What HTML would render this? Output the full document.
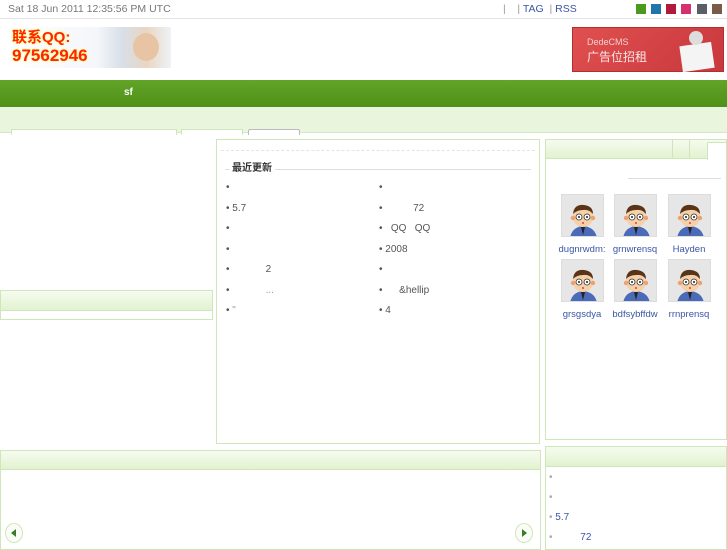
<!DOCTYPE html>
<html><head><meta charset="utf-8"><style>
*{margin:0;padding:0;box-sizing:border-box}
body{width:727px;height:545px;overflow:hidden;background:#fff;font-family:"Liberation Sans","Noto Sans CJK SC",sans-serif;font-size:10px;color:#555;position:relative}
.a{position:absolute}
.gh{background:linear-gradient(#f6fbef,#e2f2d0);border-bottom:1px solid #cfe6bb}
.box{position:absolute;border:1px solid #cfe6bb;background:#fff}
.li{position:absolute;font-size:10px;color:#555;line-height:12px}
.av{position:absolute;width:43px;height:43px;border:1px solid #ddd;background:#e6e6e6;overflow:hidden}
.nm{position:absolute;font-size:9.5px;color:#3a55a5;width:56px;text-align:center;white-space:nowrap;overflow:hidden}
.sw{position:absolute;top:4px;width:10px;height:10px}
</style></head><body>
<div class="a" style="left:0;top:0;width:727px;height:19px;border-bottom:1px solid #e4e4e4"></div>
<div class="a" style="left:8px;top:3px;color:#777;font-size:10.5px;line-height:12px">Sat 18 Jun 2011 12:35:56 PM UTC</div>
<div class="a" style="left:503px;top:3px;color:#3a55a5;font-size:10.5px;line-height:12px"><span style="color:#999">|</span>&nbsp;&nbsp;&nbsp;&nbsp;<span style="color:#999">|</span> TAG&nbsp;&nbsp;<span style="color:#999">|</span> RSS</div>
<div class="sw" style="left:636px;background:#4b9a1c"></div>
<div class="sw" style="left:651px;background:#1f74a8"></div>
<div class="sw" style="left:666px;background:#b21a3c"></div>
<div class="sw" style="left:681px;background:#d6306f"></div>
<div class="sw" style="left:697px;background:#5a5e66"></div>
<div class="sw" style="left:712px;background:#7c5a48"></div>
<div class="a" style="left:8px;top:27px;width:163px;height:41px;background:linear-gradient(90deg,#fff 0%,#f4f6fa 55%,#d8dfe8 70%,#e8d6c4 85%,#f0f2f6 100%)">
<div class="a" style="left:4px;top:2px;color:#f21;font-size:15px;line-height:17px;font-weight:bold;text-shadow:0 0 2px #ff0">联系QQ:</div>
<div class="a" style="left:4px;top:19px;color:#f21;font-size:17px;line-height:19px;font-weight:bold;text-shadow:0 0 2px #ff0">97562946</div>
<div class="a" style="left:125px;top:6px;width:26px;height:28px;border-radius:50%;background:#e8c4a4"></div>
</div>
<div class="a" style="left:572px;top:27px;width:152px;height:45px;background:linear-gradient(135deg,#e05050,#c8383c);border:1px solid #b03030">
<div class="a" style="left:14px;top:9px;color:#f3d0d0;font-size:9px">DedeCMS</div>
<div class="a" style="left:14px;top:20px;color:#fbe6e6;font-size:12px">广告位招租</div>
<div class="a" style="left:108px;top:16px;width:32px;height:26px;background:#f4f4f4;transform:rotate(-8deg)"></div>
<div class="a" style="left:116px;top:3px;width:14px;height:14px;border-radius:50%;background:#ddd"></div>
</div>
<div class="a" style="left:0;top:80px;width:727px;height:27px;background:linear-gradient(#62a428,#4f9118)"></div>
<div class="a" style="left:124px;top:87px;color:#fff;font-weight:bold;font-size:10px">sf</div>
<div class="a" style="left:0;top:107px;width:727px;height:26px;background:#eaf5de;border-bottom:1px solid #d4e9c0"></div>
<div class="a" style="left:11px;top:129px;width:166px;height:6px;background:#fff;border:1px solid #cfe6bb;border-bottom:none"></div>
<div class="a" style="left:181px;top:129px;width:62px;height:6px;background:#fff;border:1px solid #cfe6bb;border-bottom:none"></div>
<div class="a" style="left:248px;top:129px;width:52px;height:6px;background:#fff;border:1px solid #bbb;border-bottom:none;border-radius:2px 2px 0 0"></div>

<div class="box" style="left:0;top:290px;width:213px;height:30px"><div class="gh" style="height:20px"></div></div>

<div class="box" style="left:216px;top:139px;width:324px;height:305px">
<div class="a" style="left:4px;top:10px;width:314px;border-top:1px dashed #e4e4e4"></div>
<div class="a" style="left:8px;top:29px;width:306px;border-top:1px solid #ddd"></div>
<div class="a" style="left:12px;top:23px;background:#fff;padding:0 3px;font-weight:bold;color:#333;font-size:10px;line-height:12px">最近更新</div>
</div>
<div class="li" style="left:226px;top:182px">•</div>
<div class="li" style="left:226px;top:203px">• 5.7</div>
<div class="li" style="left:226px;top:223px">•</div>
<div class="li" style="left:226px;top:244px">•</div>
<div class="li" style="left:226px;top:264px">•&nbsp;&nbsp;&nbsp;&nbsp;&nbsp;&nbsp;&nbsp;&nbsp;&nbsp;&nbsp;&nbsp;&nbsp;&nbsp;2</div>
<div class="li" style="left:226px;top:285px">•&nbsp;&nbsp;&nbsp;&nbsp;&nbsp;&nbsp;&nbsp;&nbsp;&nbsp;&nbsp;&nbsp;&nbsp;&nbsp;<span style="color:#999">...</span></div>
<div class="li" style="left:226px;top:305px">• <span style="color:#999">"</span></div>
<div class="li" style="left:379px;top:182px">•</div>
<div class="li" style="left:379px;top:203px">•&nbsp;&nbsp;&nbsp;&nbsp;&nbsp;&nbsp;&nbsp;&nbsp;&nbsp;&nbsp;&nbsp;72</div>
<div class="li" style="left:379px;top:223px">•&nbsp;&nbsp;&nbsp;QQ&nbsp;&nbsp;&nbsp;QQ</div>
<div class="li" style="left:379px;top:244px">• 2008</div>
<div class="li" style="left:379px;top:264px">•</div>
<div class="li" style="left:379px;top:285px">•&nbsp;&nbsp;&nbsp;&nbsp;&nbsp;&nbsp;&amp;hellip</div>
<div class="li" style="left:379px;top:305px">• 4</div>

<div class="box" style="left:545px;top:139px;width:182px;height:301px">
<div class="gh" style="height:19px"></div>
<div class="a" style="left:126px;top:0;width:1px;height:19px;background:#cfe6bb"></div>
<div class="a" style="left:143px;top:0;width:1px;height:19px;background:#cfe6bb"></div>
<div class="a" style="left:161px;top:2px;width:20px;height:18px;background:#fff;border:1px solid #cfe6bb;border-bottom:none"></div>
<div class="a" style="left:82px;top:38px;width:93px;border-top:1px solid #ddd"></div>
</div>
<div class="av" style="left:561px;top:194px"><svg width="43" height="43"><use href="#m"/></svg></div>
<div class="av" style="left:614px;top:194px"><svg width="43" height="43"><use href="#m"/></svg></div>
<div class="av" style="left:668px;top:194px"><svg width="43" height="43"><use href="#m"/></svg></div>
<div class="av" style="left:561px;top:259px"><svg width="43" height="43"><use href="#m"/></svg></div>
<div class="av" style="left:614px;top:259px"><svg width="43" height="43"><use href="#m"/></svg></div>
<div class="av" style="left:668px;top:259px"><svg width="43" height="43"><use href="#m"/></svg></div>
<svg width="0" height="0" style="position:absolute"><defs><g id="m">
<path d="M8 43 Q10 32 21 31 Q33 32 35 43Z" fill="#4b6bb8"/>
<path d="M19 32 L21 40 L23 32Z" fill="#222"/>
<circle cx="21" cy="22" r="10" fill="#f5d0a8"/>
<path d="M11 19 Q12 9 22 10 Q31 11 31 19 Q27 14 21 15 Q15 15 11 19Z" fill="#5a3418"/>
<circle cx="17" cy="22" r="3" fill="#fff" stroke="#333" stroke-width=".8"/>
<circle cx="25" cy="22" r="3" fill="#fff" stroke="#333" stroke-width=".8"/>
<circle cx="17" cy="22" r="1" fill="#222"/><circle cx="25" cy="22" r="1" fill="#222"/>
<circle cx="11" cy="23" r="2.2" fill="#f0a070"/><circle cx="31" cy="23" r="2.2" fill="#f0a070"/>
<circle cx="21" cy="28" r="1" fill="#d44"/>
</g></defs></svg>
<div class="nm" style="left:554px;top:244px">dugnrwdm:</div>
<div class="nm" style="left:607px;top:244px">grnwrensq</div>
<div class="nm" style="left:661px;top:244px">Hayden</div>
<div class="nm" style="left:554px;top:309px">grsgsdya</div>
<div class="nm" style="left:607px;top:309px">bdfsybffdw</div>
<div class="nm" style="left:661px;top:309px">rrnprensq</div>

<div class="box" style="left:0;top:450px;width:541px;height:100px"><div class="gh" style="height:19px"></div></div>
<div class="a" style="left:5px;top:523px;width:18px;height:20px;border-radius:50%;border:1px solid #cfe6bb;background:#fafdf6"></div>
<div class="a" style="left:11px;top:529px;width:0;height:0;border-top:4px solid transparent;border-bottom:4px solid transparent;border-right:5px solid #3c7a2a"></div>
<div class="a" style="left:515px;top:523px;width:18px;height:20px;border-radius:50%;border:1px solid #cfe6bb;background:#fafdf6"></div>
<div class="a" style="left:522px;top:529px;width:0;height:0;border-top:4px solid transparent;border-bottom:4px solid transparent;border-left:5px solid #3c7a2a"></div>

<div class="box" style="left:545px;top:446px;width:182px;height:104px"><div class="gh" style="height:20px"></div></div>
<div class="li" style="left:549px;top:472px;color:#aaa">•</div>
<div class="li" style="left:549px;top:492px;color:#aaa">•</div>
<div class="li" style="left:549px;top:512px;color:#aaa">• <span style="color:#3a55a5">5.7</span></div>
<div class="li" style="left:549px;top:532px;color:#aaa">•&nbsp;&nbsp;&nbsp;&nbsp;&nbsp;&nbsp;&nbsp;&nbsp;&nbsp;&nbsp;<span style="color:#3a55a5">72</span></div>
</body></html>
